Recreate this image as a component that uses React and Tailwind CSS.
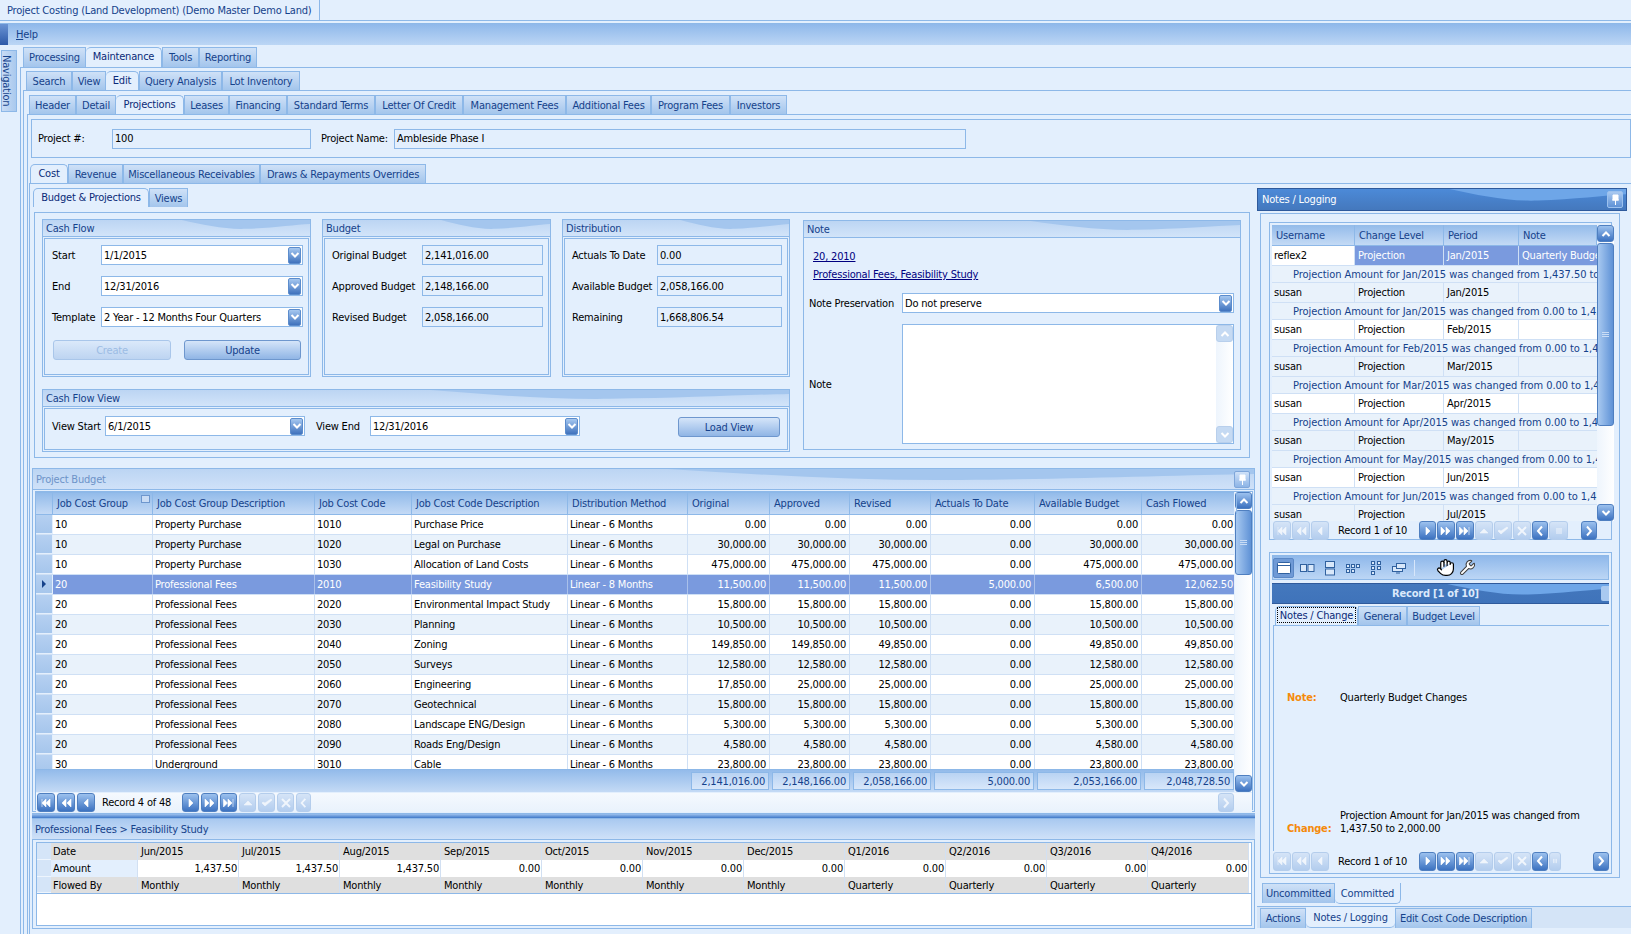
import React from "react";
import { Hand, Wrench } from "lucide-react";

const B = "border-[#8db8e8]";
const Wave = ({ fill = "#a4c6ee" }) => (
  <svg className="absolute inset-0 w-full h-full pointer-events-none" viewBox="0 0 100 10" preserveAspectRatio="none">
    <path d="M52,0 C60,3 68,6 76,5.5 C86,5 94,3 100,2.5 L100,0 Z" fill={fill} />
  </svg>
);
const Tab = ({ w, active, children, h = "h-[20px]" }) => (
  <div className={`${w} ${h} shrink-0 flex items-center justify-center whitespace-nowrap border-t border-r ${B} first:border-l ${active ? "bg-[#e3effd] rounded-t-[5px] border-l-0 -mb-px relative z-10 text-[#0a2a78] pb-[2px]" : "bg-gradient-to-b from-[#cfe1f7] to-[#a3c5ec] text-[#15428b] border-l"}`}>{children}</div>
);
const Chevron = ({ up }) => (
  <svg width="10" height="8" viewBox="0 0 10 8"><path d={up ? "M1.5 6 L5 2.5 L8.5 6" : "M1.5 2 L5 5.5 L8.5 2"} fill="none" stroke="white" strokeWidth="2" /></svg>
);
const DropBtn = ({ cls = "" }) => (
  <div className={`w-[13px] h-[17px] rounded-[2px] flex items-center justify-center bg-gradient-to-b from-[#a6c8f0] to-[#3f72bd] border border-[#5c8ccc] ${cls}`}><Chevron /></div>
);
const Combo = ({ w, children }) => (
  <div className={`${w} h-[20px] bg-white border ${B} flex items-center pl-[2px] justify-between pr-[1px]`}><span className="whitespace-nowrap">{children}</span><DropBtn /></div>
);
const Field = ({ w, children }) => (
  <div className={`${w} h-[20px] border ${B} flex items-center pl-[2px] whitespace-nowrap`}>{children}</div>
);
const Group = ({ w, h, title, children, inner = "" }) => (
  <div className={`${w} ${h} border ${B} flex flex-col`}>
    <div className={`relative h-[17px] shrink-0 bg-gradient-to-b from-[#bcd5f3] to-[#d2e4f9] border-b ${B} flex items-center pl-[3px] text-[#15428b]`}>
      <Wave /><span className="relative">{title}</span>
    </div>
    <div className={`flex-1 m-px border ${B} ${inner}`}>{children}</div>
  </div>
);
const Row = ({ label, lw, children }) => (
  <div className="flex items-center h-[20px]"><span className={`${lw} shrink-0 whitespace-nowrap`}>{label}</span>{children}</div>
);
const Btn = ({ w, disabled, children }) => (
  <div className={`${w} h-[20px] rounded-[3px] flex items-center justify-center border ${disabled ? "border-[#a9c6ea] bg-gradient-to-b from-[#dbe9fa] to-[#bdd4f1] text-[#9cbce4]" : "border-[#6e97ce] bg-gradient-to-b from-[#d5e5f9] to-[#90b5e5] text-[#15428b]"}`}>{children}</div>
);

const glyphs = {
  first: "M3 3v8M11 3 7 7l4 4zM7 3 3 7l4 4z",
  prevp: "M7 3 3 7l4 4zM12 3 8 7l4 4z",
  prev: "M9 3 5 7l4 4z",
  next: "M5 3l4 4-4 4z",
  nextp: "M2 3l4 4-4 4zM7 3l4 4-4 4z",
  last: "M1.5 3l4 4-4 4zM6 3l4 4-4 4zM11 3v8",
  up: "M3 9l4-4 4 4z",
  check: "M2 7l3 3 7-6-1-1-6 4-2-1z",
  x: "M3 3l8 8M11 3l-8 8",
  left: "M9 2.5 5 7l4 4.5",
  right: "M5 2.5 9 7l-4 4.5",
  bars: "M5 4v6M7 4v6M9 4v6",
};
const Nav = ({ t, off, w = "w-[18px]" }) => {
  const line = t === "x" || t === "left" || t === "right" || t === "bars";
  return (
    <div className={`${w} h-[19px] shrink-0 rounded-[3px] flex items-center justify-center border ${off ? "border-[#b4cdec] bg-gradient-to-b from-[#d5e4f7] to-[#b3cdee]" : "border-[#4f7fc0] bg-gradient-to-b from-[#9cc1ee] to-[#3c72c0]"}`}>
      <svg width="14" height="14" viewBox="0 0 14 14">
        <path d={glyphs[t]} fill={line ? "none" : "white"} stroke="white" strokeWidth={line ? (t === "bars" ? 1 : 2) : 0.6} opacity={off ? 0.75 : 1} />
      </svg>
    </div>
  );
};

const rowsData = [
  ["10", "Property Purchase", "1010", "Purchase Price", "0.00", "0.00", "0.00", "0.00", "0.00", "0.00"],
  ["10", "Property Purchase", "1020", "Legal on Purchase", "30,000.00", "30,000.00", "30,000.00", "0.00", "30,000.00", "30,000.00"],
  ["10", "Property Purchase", "1030", "Allocation of Land Costs", "475,000.00", "475,000.00", "475,000.00", "0.00", "475,000.00", "475,000.00"],
  ["20", "Professional Fees", "2010", "Feasibility Study", "11,500.00", "11,500.00", "11,500.00", "5,000.00", "6,500.00", "12,062.50"],
  ["20", "Professional Fees", "2020", "Environmental Impact Study", "15,800.00", "15,800.00", "15,800.00", "0.00", "15,800.00", "15,800.00"],
  ["20", "Professional Fees", "2030", "Planning", "10,500.00", "10,500.00", "10,500.00", "0.00", "10,500.00", "10,500.00"],
  ["20", "Professional Fees", "2040", "Zoning", "149,850.00", "149,850.00", "49,850.00", "0.00", "49,850.00", "49,850.00"],
  ["20", "Professional Fees", "2050", "Surveys", "12,580.00", "12,580.00", "12,580.00", "0.00", "12,580.00", "12,580.00"],
  ["20", "Professional Fees", "2060", "Engineering", "17,850.00", "25,000.00", "25,000.00", "0.00", "25,000.00", "25,000.00"],
  ["20", "Professional Fees", "2070", "Geotechnical", "15,800.00", "15,800.00", "15,800.00", "0.00", "15,800.00", "15,800.00"],
  ["20", "Professional Fees", "2080", "Landscape ENG/Design", "5,300.00", "5,300.00", "5,300.00", "0.00", "5,300.00", "5,300.00"],
  ["20", "Professional Fees", "2090", "Roads Eng/Design", "4,580.00", "4,580.00", "4,580.00", "0.00", "4,580.00", "4,580.00"],
  ["30", "Underground", "3010", "Cable", "23,800.00", "23,800.00", "23,800.00", "0.00", "23,800.00", "23,800.00"],
];
const cols = "grid grid-cols-[17px_100px_162px_97px_156px_120px_82px_80px_81px_104px_107px_95px]";
const heads = ["Job Cost Group", "Job Cost Group Description", "Job Cost Code", "Job Cost Code Description", "Distribution Method", "Original", "Approved", "Revised", "Actuals To Date", "Available Budget", "Cash Flowed"];
const Cell = ({ right, sel, children }) => (
  <div className={`border-r ${sel ? "border-[#a9c0ea]" : "border-[#cfe0f5]"} flex items-center overflow-hidden whitespace-nowrap ${right ? "justify-end pr-[3px]" : "pl-[2px]"}`}>{children}</div>
);
const BudgetGrid = () => (
  <div className="flex-1 min-w-0 flex flex-col">
    <div className={`${cols} h-[23px] bg-gradient-to-b from-[#93bbea] to-[#c4daf5] border-b border-t ${B} shrink-0 text-[#15428b]`}>
      <div className={`border-r ${B}`} />
      {heads.map((h, i) => <div key={h} className={`border-r ${B} flex items-center pl-[4px] whitespace-nowrap relative`}>{h}{i === 0 && <span className="absolute right-[2px] top-[2px] w-[9px] h-[8px] border border-[#6e97ce] bg-[#c9dcf5]" />}</div>)}
    </div>
    <div className="h-[254px] overflow-hidden shrink-0">
      {rowsData.map((r, i) => {
        const sel = i === 3;
        return (
          <div key={r[2]} className={`${cols} h-[20px] border-b border-[#cfe0f5] ${sel ? "bg-[#7a9ade] text-white" : i % 2 ? "bg-[#e9f2fb]" : "bg-white"}`}>
            <div className={`bg-gradient-to-b from-[#b5d0f1] to-[#a6c6ec] border-r border-b border-[#e3effd] flex items-center justify-center text-black`}>{sel && <svg width="6" height="8" viewBox="0 0 6 8"><path d="M1 0l4 4-4 4z" fill="#15428b" /></svg>}</div>
            <Cell sel={sel}>{r[0]}</Cell><Cell sel={sel}>{r[1]}</Cell><Cell sel={sel}>{r[2]}</Cell><Cell sel={sel}>{r[3]}</Cell>
            <Cell sel={sel}>{r[2] === "2010" ? "Linear - 8 Months" : "Linear - 6 Months"}</Cell>
            {r.slice(4).map((v, j) => <Cell key={j} right sel={sel}>{v}</Cell>)}
          </div>
        );
      })}
    </div>
    <div className={`h-[23px] shrink-0 border-t ${B} bg-gradient-to-b from-[#93bbea] to-[#c4daf5] flex items-center pl-[655px] text-[#15428b]`}>
      {[["w-[78px]", "2,141,016.00"], ["w-[78px]", "2,148,166.00"], ["w-[78px]", "2,058,166.00"], ["w-[100px]", "5,000.00"], ["w-[104px]", "2,053,166.00"], ["w-[90px]", "2,048,728.50"]].map(([w, v]) => (
        <div key={v} className={`${w} h-[18px] shrink-0 mr-[3px] border ${B} bg-gradient-to-b from-[#b9d3f3] to-[#d8e7fa] flex items-center justify-end pr-[3px]`}>{v}</div>
      ))}
    </div>
  </div>
);

const Scroll = ({ h, thumb, off }) => (
  <div className={`w-[17px] ${h} shrink-0 flex flex-col bg-gradient-to-r from-[#eef5fd] to-white`}>
    <div className={`h-[17px] rounded-[3px] flex items-center justify-center border shrink-0 ${off ? "bg-[#c5daf3] border-[#b8cfec]" : "bg-gradient-to-b from-[#9cc1ee] to-[#3c72c0] border-[#4f7fc0]"}`}><Chevron up /></div>
    {thumb ? <div className={`${thumb} mt-px rounded-[3px] border border-[#4f7fc0] bg-gradient-to-r from-[#a8c9f0] to-[#5f92d6] flex items-center justify-center shrink-0`}><div className="w-[7px] h-[5px] border-y border-[#c9dcf5] relative after:absolute after:left-0 after:right-0 after:top-[1px] after:h-px after:bg-[#c9dcf5]" /></div> : null}
    <div className="flex-1" />
    <div className={`h-[17px] rounded-[3px] flex items-center justify-center border shrink-0 ${off ? "bg-[#c5daf3] border-[#b8cfec]" : "bg-gradient-to-b from-[#9cc1ee] to-[#3c72c0] border-[#4f7fc0]"}`}><Chevron /></div>
  </div>
);

const logRows = [
  ["reflex2", "Jan/2015", "Projection Amount for Jan/2015 was changed from 1,437.50 to 2,000.00"],
  ["susan", "Jan/2015", "Projection Amount for Jan/2015 was changed from 0.00 to 1,437.50"],
  ["susan", "Feb/2015", "Projection Amount for Feb/2015 was changed from 0.00 to 1,437.50"],
  ["susan", "Mar/2015", "Projection Amount for Mar/2015 was changed from 0.00 to 1,437.50"],
  ["susan", "Apr/2015", "Projection Amount for Apr/2015 was changed from 0.00 to 1,437.50"],
  ["susan", "May/2015", "Projection Amount for May/2015 was changed from 0.00 to 1,437.50"],
  ["susan", "Jun/2015", "Projection Amount for Jun/2015 was changed from 0.00 to 1,437.50"],
  ["susan", "Jul/2015", ""],
];
const lcols = "grid grid-cols-[83px_89px_75px_78px]";
const LogGrid = () => (
  <div className="w-[325px] shrink-0 overflow-hidden h-[296px]">
    <div className={`${lcols} h-[21px] bg-gradient-to-b from-[#93bbea] to-[#c4daf5] border-b ${B} text-[#15428b]`}>
      {["Username", "Change Level", "Period", "Note"].map(h => <div key={h} className={`border-r ${B} flex items-center pl-[4px]`}>{h}</div>)}
    </div>
    {logRows.map((r, i) => (
      <div key={i}>
        <div className={`${lcols} h-[20px] border-b border-[#cfe0f5] ${i === 0 ? "bg-white" : i % 2 ? "bg-[#e9f2fb]" : "bg-white"}`}>
          <div className="border-r border-[#cfe0f5] flex items-center pl-[2px]">{r[0]}</div>
          <div className={`border-r border-[#cfe0f5] flex items-center pl-[3px] ${i === 0 ? "bg-[#7a9ade] text-white" : ""}`}>Projection</div>
          <div className={`border-r border-[#cfe0f5] flex items-center pl-[3px] ${i === 0 ? "bg-[#7a9ade] text-white" : ""}`}>{r[1]}</div>
          <div className={`flex items-center pl-[3px] overflow-hidden whitespace-nowrap ${i === 0 ? "bg-[#7a9ade] text-white" : ""}`}>{i === 0 ? "Quarterly Budget Changes" : ""}</div>
        </div>
        {r[2] && <div className="h-[17px] bg-[#e9f2fb] border-b border-[#cfe0f5] flex items-center pl-[21px] text-[#15428b] whitespace-nowrap tracking-[-0.05px]">{r[2]}</div>}
      </div>
    ))}
  </div>
);

const months = ["Jun/2015", "Jul/2015", "Aug/2015", "Sep/2015", "Oct/2015", "Nov/2015", "Dec/2015", "Q1/2016", "Q2/2016", "Q3/2016", "Q4/2016"];
const amounts = ["1,437.50", "1,437.50", "1,437.50", "0.00", "0.00", "0.00", "0.00", "0.00", "0.00", "0.00", "0.00"];
const scols = "grid grid-cols-[14px_87px_repeat(11,101px)]";
const SubRow = ({ a, vals, right, white, last }) => (
  <div className={`${scols} h-[17px] ${last ? `border-b ${B}` : ""}`}>
    <div className="bg-[#d5e5f8] border-b border-[#eef5fd]" />
    <div className={`${white ? "bg-[#e3effd]" : "bg-[#dfdfdf]"} flex items-center pl-[2px] border-r border-[#d2e0f2]`}>{a}</div>
    {vals.map((v, i) => <div key={i} className={`${white ? "bg-white" : "bg-[#dfdfdf]"} border-r border-[#d2e0f2] flex items-center ${right ? "justify-end pr-[1px]" : "pl-[3px]"}`}>{v}</div>)}
  </div>
);

const LayoutIcon = ({ d, active }) => (
  <div className={`w-[21px] h-[20px] mr-[2px] flex items-center justify-center rounded-[2px] ${active ? "bg-[#6f9ad6] border border-[#5b88c6]" : ""}`}>
    <svg width="16" height="16" viewBox="0 0 16 16" fill={active ? "white" : "#d9e8fa"} stroke="#30619f" strokeWidth="1">{d}</svg>
  </div>
);
const RecordNav = ({ tail }) => (
  <div className="h-[20px] flex items-center pl-[1px] gap-[1px]">
    <Nav t="first" off /><Nav t="prevp" off /><Nav t="prev" off />
    <span className="w-[88px] pl-[8px] shrink-0 whitespace-nowrap">Record 1 of 10</span>
    <Nav t="next" w="w-[17px]" /><Nav t="nextp" /><Nav t="last" /><Nav t="up" off /><Nav t="check" off /><Nav t="x" off /><Nav t="left" w="w-[16px]" />
    {tail}
  </div>
);

export default function App() {
  return (
    <div className="w-[1631px] h-[934px] overflow-hidden flex flex-col bg-[#e3effd] text-black text-[11px] leading-none tracking-[-0.2px] font-['DejaVu_Sans_Condensed','DejaVu_Sans',sans-serif]">
      {/* window tab */}
      <div className={`h-[23px] shrink-0 flex`}>
        <div className={`w-[320px] shrink-0 h-[21px] border-r border-b ${B} flex items-center pl-[7px] text-[#15428b] whitespace-nowrap`}>Project Costing (Land Development) (Demo Master Demo Land)</div>
        <div className={`flex-1 h-[21px] border-b ${B}`} />
      </div>
      {/* menu */}
      <div className={`h-[22px] shrink-0 flex items-center bg-gradient-to-b from-[#8fb8ea] to-[#bcd6f5] border-t ${B}`}>
        <div className="w-[8px] h-full bg-gradient-to-b from-[#6b94d4] to-[#2d59a8]" />
        <span className="ml-[8px] text-[#15428b]"><u>H</u>elp</span>
      </div>
      <div className="flex-1 flex min-h-0">
        {/* navigation strip */}
        <div className="w-[20px] shrink-0 pt-[5px] pl-[1px]">
          <div className={`w-[16px] h-[62px] border ${B} bg-gradient-to-r from-[#c9dcf5] to-[#a9c9ee] flex items-center justify-center pr-[5px]`}>
            <span className="[writing-mode:vertical-rl] text-[#15428b]">Navigation</span>
          </div>
        </div>
        <div className="flex-1 min-w-0 flex flex-col">
          <div className="h-[22px] pt-[2px] pl-[3px] flex shrink-0">
            <Tab w="w-[63px]">Processing</Tab><Tab w="w-[76px]" active>Maintenance</Tab><Tab w="w-[37px]">Tools</Tab><Tab w="w-[58px]">Reporting</Tab>
          </div>
          <div className={`flex-1 min-h-0 border-l border-t ${B} pl-[2px] flex flex-col`}>
            <div className="h-[22px] pt-[3px] pl-[3px] flex shrink-0">
              <Tab w="w-[46px]" h="h-[19px]">Search</Tab><Tab w="w-[34px]" h="h-[19px]">View</Tab><Tab w="w-[33px]" h="h-[19px]" active>Edit</Tab><Tab w="w-[83px]" h="h-[19px]">Query Analysis</Tab><Tab w="w-[78px]" h="h-[19px]">Lot Inventory</Tab>
            </div>
            <div className={`flex-1 min-h-0 border-l border-t ${B} pl-[3px] flex flex-col`}>
              <div className="h-[23px] pt-[4px] pl-[2px] flex shrink-0">
                <Tab w="w-[47px]" h="h-[19px]">Header</Tab><Tab w="w-[40px]" h="h-[19px]">Detail</Tab><Tab w="w-[68px]" h="h-[19px]" active>Projections</Tab><Tab w="w-[45px]" h="h-[19px]">Leases</Tab><Tab w="w-[58px]" h="h-[19px]">Financing</Tab><Tab w="w-[88px]" h="h-[19px]">Standard Terms</Tab><Tab w="w-[88px]" h="h-[19px]">Letter Of Credit</Tab><Tab w="w-[103px]" h="h-[19px]">Management Fees</Tab><Tab w="w-[85px]" h="h-[19px]">Additional Fees</Tab><Tab w="w-[79px]" h="h-[19px]">Program Fees</Tab><Tab w="w-[57px]" h="h-[19px]">Investors</Tab>
              </div>
              <div className={`flex-1 min-h-0 border-l border-t ${B} pl-[1px] flex flex-col`}>
                <div className={`ml-[2px] mt-[4px] h-[39px] shrink-0 border ${B} flex items-center pl-[6px]`}>
                  <span className="w-[74px]">Project #:</span>
                  <Field w="w-[199px]">100</Field>
                  <span className="ml-[10px] w-[73px]">Project Name:</span>
                  <Field w="w-[572px]">Ambleside Phase I</Field>
                </div>
                <div className="h-[25px] pt-[6px] pl-px flex shrink-0">
                  <Tab w="w-[38px]" h="h-[19px]" active>Cost</Tab><Tab w="w-[55px]" h="h-[19px]">Revenue</Tab><Tab w="w-[137px]" h="h-[19px]">Miscellaneous Receivables</Tab><Tab w="w-[166px]" h="h-[19px]">Draws &amp; Repayments Overrides</Tab>
                </div>
                <div className={`flex-1 min-h-0 border-l border-t ${B} pl-[2px] flex`}>
                  {/* left column */}
                  <div className="w-[1223px] shrink-0 flex flex-col">
                    <div className="h-[23px] pt-[4px] pl-px flex shrink-0">
                      <Tab w="w-[116px]" h="h-[19px]" active>Budget &amp; Projections</Tab><Tab w="w-[39px]" h="h-[19px]">Views</Tab>
                    </div>
                    <div className={`ml-[2px] mt-[5px] w-[1216px] h-[246px] shrink-0 border ${B} pl-[7px] pt-[6px] flex`}>
                      <div className="w-[748px] shrink-0 flex flex-col">
                        <div className="flex gap-[11px]">
                          <Group w="w-[269px]" h="h-[158px]" title="Cash Flow" inner="pl-[7px] pt-[6px] flex flex-col gap-[11px]">
                            <Row label="Start" lw="w-[49px]"><Combo w="w-[202px]">1/1/2015</Combo></Row>
                            <Row label="End" lw="w-[49px]"><Combo w="w-[202px]">12/31/2016</Combo></Row>
                            <Row label="Template" lw="w-[49px]"><Combo w="w-[202px]">2 Year - 12 Months Four Quarters</Combo></Row>
                            <div className="flex pl-[1px] gap-[13px] mt-[2px]"><Btn w="w-[118px]" disabled>Create</Btn><Btn w="w-[117px]">Update</Btn></div>
                          </Group>
                          <Group w="w-[229px]" h="h-[158px]" title="Budget" inner="pl-[7px] pt-[6px] flex flex-col gap-[11px]">
                            <Row label="Original Budget" lw="w-[90px]"><Field w="w-[121px]">2,141,016.00</Field></Row>
                            <Row label="Approved Budget" lw="w-[90px]"><Field w="w-[121px]">2,148,166.00</Field></Row>
                            <Row label="Revised Budget" lw="w-[90px]"><Field w="w-[121px]">2,058,166.00</Field></Row>
                          </Group>
                          <Group w="w-[228px]" h="h-[158px]" title="Distribution" inner="pl-[7px] pt-[6px] flex flex-col gap-[11px]">
                            <Row label="Actuals To Date" lw="w-[85px]"><Field w="w-[125px]">0.00</Field></Row>
                            <Row label="Available Budget" lw="w-[85px]"><Field w="w-[125px]">2,058,166.00</Field></Row>
                            <Row label="Remaining" lw="w-[85px]"><Field w="w-[125px]">1,668,806.54</Field></Row>
                          </Group>
                        </div>
                        <div className="mt-[12px]">
                          <Group w="w-[748px]" h="h-[63px]" title="Cash Flow View" inner="pl-[7px] pt-[7px] flex items-start">
                            <Row label="View Start" lw="w-[53px]"><Combo w="w-[200px]">6/1/2015</Combo></Row>
                            <span className="ml-[11px] w-[54px] h-[20px] flex items-center">View End</span>
                            <Combo w="w-[210px]">12/31/2016</Combo>
                            <div className="ml-[98px] mt-px"><Btn w="w-[102px]">Load View</Btn></div>
                          </Group>
                        </div>
                      </div>
                      <div className={`ml-[13px] mt-px w-[438px] h-[230px] border ${B} flex flex-col`}>
                        <div className={`relative h-[17px] shrink-0 bg-gradient-to-b from-[#bcd5f3] to-[#d2e4f9] border-b ${B} flex items-center pl-[3px] text-[#15428b]`}><Wave /><span className="relative">Note</span></div>
                        <div className="pl-[9px] pt-[10px] text-[#000080] underline leading-[18px]"><div>20, 2010</div><div>Professional Fees, Feasibility Study</div></div>
                        <div className="flex items-center mt-[9px] pl-[5px]"><span className="w-[93px]">Note Preservation</span><Combo w="w-[332px]">Do not preserve</Combo></div>
                        <div className="flex items-center mt-[11px] pl-[5px]">
                          <span className="w-[93px]">Note</span>
                          <div className={`w-[332px] h-[120px] bg-white border ${B} flex justify-end`}><Scroll h="h-full" off /></div>
                        </div>
                      </div>
                    </div>
                    {/* project budget */}
                    <div className={`mt-[10px] h-[344px] shrink-0 border ${B} flex flex-col`}>
                      <div className={`relative h-[21px] shrink-0 bg-gradient-to-b from-[#bcd5f3] to-[#cfe1f8] border-b ${B} flex items-center justify-between pl-[3px] pr-[4px] text-[#6d93c8]`}>
                        <Wave /><span className="relative">Project Budget</span>
                        <div className="relative w-[16px] h-[17px] rounded-[2px] border border-[#7ea6da] bg-gradient-to-b from-[#cfe1f8] to-[#8db4e6] flex items-center justify-center"><svg width="9" height="11" viewBox="0 0 9 11"><path d="M2 1h5v5H2zM1 6h7M4.5 6v5" fill="white" stroke="white" strokeWidth="1" /></svg></div>
                      </div>
                      <div className={`m-px ml-[2px] flex-1 border ${B} flex flex-col min-h-0`}>
                        <div className="flex shrink-0">
                          <BudgetGrid />
                          <div className="pl-px"><Scroll h="h-[300px]" thumb="h-[65px]" /></div>
                        </div>
                        <div className="h-[20px] mt-px flex items-center gap-[2px] pl-[1px] bg-gradient-to-b from-[#f5f9fe] to-[#e9f2fc]">
                          <Nav t="first" /><Nav t="prevp" /><Nav t="prev" />
                          <span className="w-[83px] pl-[5px] shrink-0 whitespace-nowrap">Record 4 of 48</span>
                          <Nav t="next" w="w-[17px]" /><Nav t="nextp" w="w-[17px]" /><Nav t="last" w="w-[17px]" /><Nav t="up" off w="w-[17px]" /><Nav t="check" off w="w-[17px]" /><Nav t="x" off w="w-[17px]" /><Nav t="left" off w="w-[15px]" />
                          <div className="flex-1" /><div className="mr-[18px]"><Nav t="right" off w="w-[16px]" /></div>
                        </div>
                      </div>
                    </div>
                    {/* details */}
                    <div className="h-[6px] shrink-0 mt-px bg-gradient-to-b from-[#9cc1ee] to-[#3f78c8] border-y border-[#8db8e8]" />
                    <div className={`h-[20px] shrink-0 bg-gradient-to-b from-[#a9c9f0] to-[#cfe1f8] flex items-center pl-[3px] text-[#15428b]`}>Professional Fees &gt; Feasibility Study</div>
                    <div className={`h-[90px] shrink-0 border ${B} pl-[3px] pr-[2px] pb-[2px] pt-[2px] bg-[#e3effd]`}>
                      <div className={`h-full border ${B} bg-white`}>
                        <SubRow a="Date" vals={months} />
                        <SubRow a="Amount" vals={amounts} right white />
                        <SubRow a="Flowed By" vals={["Monthly", "Monthly", "Monthly", "Monthly", "Monthly", "Monthly", "Monthly", "Quarterly", "Quarterly", "Quarterly", "Quarterly"]} last />
                      </div>
                    </div>
                  </div>
                  {/* right column */}
                  <div className="flex-1 min-w-0 ml-[2px] pt-[4px] flex flex-col">
                    <div className={`relative h-[23px] shrink-0 w-[370px] bg-gradient-to-b from-[#4c8ad8] to-[#4478bd] border border-[#2f5a9c] flex items-center justify-between pl-[4px] pr-[3px] text-white`}>
                      <Wave fill="#6ea6e8" /><span className="relative">Notes / Logging</span>
                      <div className="relative w-[16px] h-[17px] rounded-[2px] border border-[#9cc1ee] bg-gradient-to-b from-[#a9c9f0] to-[#5f92d6] flex items-center justify-center"><svg width="9" height="11" viewBox="0 0 9 11"><path d="M2 1h5v5H2zM1 6h7M4.5 6v5" fill="white" stroke="white" strokeWidth="1" /></svg></div>
                    </div>
                    <div className={`mt-[2px] ml-[3px] w-[360px] h-[665px] shrink-0 border ${B} pl-[8px] pt-[8px]`}>
                      <div className={`w-[343px] h-[318px] border ${B} p-[2px] flex flex-col`}>
                        <div className="flex h-[296px] shrink-0"><LogGrid /><Scroll h="h-[296px]" thumb="h-[183px]" /></div>
                        <RecordNav tail={<><Nav t="bars" off w="w-[19px]" /><div className="w-[11px]" /><Nav t="right" w="w-[16px]" /></>} />
                      </div>
                      <div className={`mt-[12px] w-[343px] h-[322px] border ${B} p-[2px] flex flex-col`}>
                        <div className={`h-[25px] shrink-0 bg-gradient-to-b from-[#8fb8ea] to-[#bcd6f5] border ${B} flex items-center`}>
                          <LayoutIcon active d={<><rect x="1.5" y="2.5" width="13" height="11" rx="1" /><path d="M1.5 5.5h13" /></>} />
                          <LayoutIcon d={<><rect x="1.5" y="4.5" width="6" height="7" /><rect x="9" y="4.5" width="6" height="7" /></>} />
                          <LayoutIcon d={<><rect x="3.5" y="1.5" width="9" height="6" /><rect x="3.5" y="9" width="9" height="6" /></>} />
                          <LayoutIcon d={<><rect x="1.5" y="4.5" width="3" height="3" /><rect x="6.5" y="4.5" width="3" height="3" /><rect x="11.5" y="4.5" width="3" height="3" /><rect x="1.5" y="9.5" width="3" height="3" /><rect x="6.5" y="9.5" width="3" height="3" /></>} />
                          <LayoutIcon d={<><rect x="3.5" y="1.5" width="3" height="3" /><rect x="9.5" y="1.5" width="3" height="3" /><rect x="3.5" y="6.5" width="3" height="3" /><rect x="9.5" y="6.5" width="3" height="3" /><rect x="3.5" y="11.5" width="3" height="3" /></>} />
                          <LayoutIcon d={<><rect x="1.5" y="6.5" width="10" height="5" /><rect x="5.5" y="3.5" width="9" height="5" /><path d="M5 13h4" /></>} />
                          <div className={`w-px h-[16px] ml-[3px] bg-[#d7e6fa]`} />
                          <Hand size={19} className="ml-[21px] mr-[3px] text-black fill-white" strokeWidth={1.5} />
                          <Wrench size={17} className="ml-[1px] text-[#404040] fill-white" strokeWidth={1.5} />
                        </div>
                        <div className="relative mt-[3px] h-[21px] shrink-0 bg-gradient-to-b from-[#4478bd] to-[#3f73ba] border-y border-[#2f5a9c] flex items-center justify-center text-white font-bold pr-[10px]">
                          <Wave fill="#6ea6e8" /><span className="relative text-[#dce9fb]">Record [1 of 10]</span>
                          <div className="absolute right-0 top-[2px] w-[8px] h-[15px] rounded-l-[2px] bg-[#a9c9f0]" />
                        </div>
                        <div className="h-[21px] pt-[2px] pl-[3px] flex shrink-0">
                          <Tab w="w-[83px]" h="h-[19px]" active><span className="border border-dotted border-black px-[2px] h-[16px] flex items-center">Notes / Change</span></Tab>
                          <Tab w="w-[49px]" h="h-[19px]">General</Tab><Tab w="w-[73px]" h="h-[19px]">Budget Level</Tab>
                        </div>
                        <div className={`flex-1 min-h-0 border-l border-t ${B} ml-[1px] pl-[13px]`}>
                          <div className="mt-[63px] h-[16px] flex items-center"><span className="w-[53px] text-[#f58a0b] font-bold">Note:</span>Quarterly Budget Changes</div>
                          <div className="mt-[104px] flex items-end leading-[13px]"><span className="w-[53px] text-[#f58a0b] font-bold">Change:</span><span className="w-[250px]">Projection Amount for Jan/2015 was changed from 1,437.50 to 2,000.00</span></div>
                        </div>
                        <RecordNav tail={<><Nav t="bars" off w="w-[12px]" /><div className="w-[34px]" /><Nav t="right" w="w-[16px]" /></>} />
                      </div>
                    </div>
                    <div className="h-[28px] pt-[5px] pl-[5px] flex shrink-0">
                      <Tab w="w-[73px]">Uncommitted</Tab>
                      <div className={`w-[66px] h-[21px] border-r border-b ${B} rounded-b-[5px] flex items-center justify-center text-[#15428b]`}>Committed</div>
                    </div>
                    <div className={`h-[22px] flex items-end pl-[3px] bg-[#d4e4f7] border-t ${B} shrink-0`}>
                      <Tab w="w-[46px]">Actions</Tab>
                      <div className={`w-[89px] h-[21px] bg-[#e3effd] rounded-b-[5px] border-b ${B} flex items-center justify-center text-[#15428b]`}>Notes / Logging</div>
                      <Tab w="w-[137px]">Edit Cost Code Description</Tab>
                    </div>
                  </div>
                </div>
              </div>
            </div>
          </div>
        </div>
      </div>
    </div>
  );
}
